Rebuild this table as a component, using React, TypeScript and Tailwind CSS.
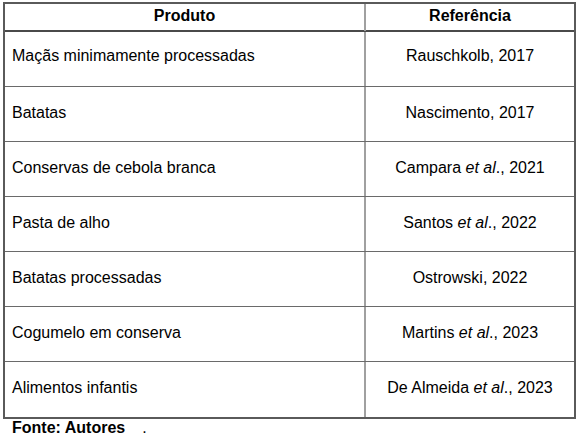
import React from "react";

interface Row {
    produto: string;
    autor: string;
    etal: boolean;
    ano: string;
}

const rows: Row[] = [
    { produto: "Maçãs minimamente processadas", autor: "Rauschkolb", etal: false, ano: "2017" },
    { produto: "Batatas", autor: "Nascimento", etal: false, ano: "2017" },
    { produto: "Conservas de cebola branca", autor: "Campara", etal: true, ano: "2021" },
    { produto: "Pasta de alho", autor: "Santos", etal: true, ano: "2022" },
    { produto: "Batatas processadas", autor: "Ostrowski", etal: false, ano: "2022" },
    { produto: "Cogumelo em conserva", autor: "Martins", etal: true, ano: "2023" },
    { produto: "Alimentos infantis", autor: "De Almeida", etal: true, ano: "2023" },
];

export default function App() {
    return (
        <div className="w-[583px] h-[445px] bg-white pt-[2px] pl-[3px] text-[16px] text-black font-['Liberation_Sans',Arial,sans-serif]">
            <div className="w-[573px] border-2 border-[#5a5a5a]">
                {/* Header */}
                <div className="grid grid-cols-[361px_1fr] h-[28px] border-b-2 border-[#4a4a4a]">
                    <div className="border-r-2 border-[#a0a0a0] flex items-center justify-center font-bold pb-[3px]">
                        Produto
                    </div>
                    <div className="flex items-center justify-center font-bold pb-[3px]">
                        Referência
                    </div>
                </div>
                {rows.map((r, i) => {
                    const pad = i === 0 ? "pt-[12px]" : "pt-[14px]";
                    return (
                        <div
                            key={r.produto}
                            className={`grid grid-cols-[361px_1fr] h-[55px] ${i < rows.length - 1 ? "border-b border-[#6a6a6a]" : ""}`}
                        >
                            <div className={`border-r-2 border-[#a0a0a0] pl-[7px] ${pad}`}>{r.produto}</div>
                            <div className={`text-center ${pad}`}>
                                {r.autor}
                                {r.etal && (
                                    <>
                                        {" "}
                                        <i>et al</i>.
                                    </>
                                )}
                                , {r.ano}
                            </div>
                        </div>
                    );
                })}
            </div>
            <div className="pl-[9px] pt-[1px] leading-[16px] font-bold">
                Fonte: Autores<span className="font-normal pl-[17px]">.</span>
            </div>
        </div>
    );
}
